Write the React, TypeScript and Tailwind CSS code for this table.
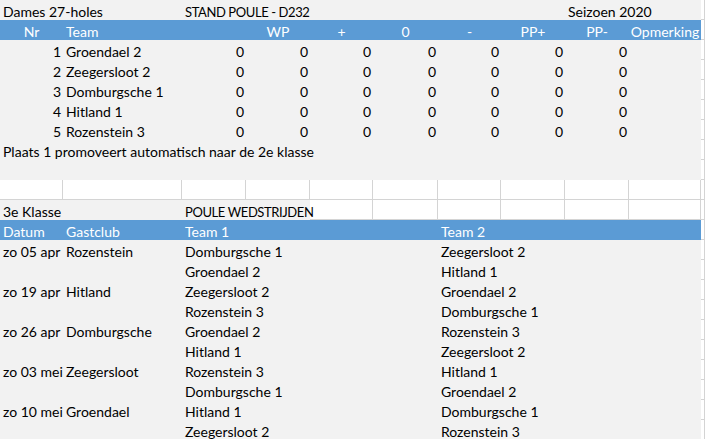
import React from "react";

type Fill = "gray" | "white" | "blue";
type Align = "left" | "right" | "center";

const fills: Record<Fill, string> = {
  gray: "bg-[#f2f2f2] text-black",
  white: "bg-white border-r border-b border-[#d4d4d4]",
  blue: "bg-[#5b9bd5] text-white",
};

const aligns: Record<Align, string> = {
  left: "justify-start pl-[3px]",
  right: "justify-end pr-[2px]",
  center: "justify-center",
};

function Cell({
  fill = "gray",
  align = "left",
  span = "",
  tight = false,
  children,
}: {
  fill?: Fill;
  align?: Align;
  span?: string;
  tight?: boolean;
  children?: React.ReactNode;
}) {
  return (
    <div className={`flex items-end whitespace-nowrap leading-4 ${fills[fill]} ${aligns[align]} ${span}`}>
      {/* text spills over neighbouring cells like in a sheet */}
      <span className={`relative z-10 ${tight ? "text-[13px] tracking-[-0.4px]" : ""}`}>{children}</span>
    </div>
  );
}

// column K: the white strip past the used area
const Edge = () => <Cell fill="white" />;

const teams = ["Groendael 2", "Zeegersloot 2", "Domburgsche 1", "Hitland 1", "Rozenstein 3"];

const matches: [string, string, string, string][] = [
  ["zo 05 apr", "Rozenstein", "Domburgsche 1", "Zeegersloot 2"],
  ["", "", "Groendael 2", "Hitland 1"],
  ["zo 19 apr", "Hitland", "Zeegersloot 2", "Groendael 2"],
  ["", "", "Rozenstein 3", "Domburgsche 1"],
  ["zo 26 apr", "Domburgsche", "Groendael 2", "Rozenstein 3"],
  ["", "", "Hitland 1", "Zeegersloot 2"],
  ["zo 03 mei", "Zeegersloot", "Rozenstein 3", "Hitland 1"],
  ["", "", "Domburgsche 1", "Groendael 2"],
  ["zo 10 mei", "Groendael", "Hitland 1", "Domburgsche 1"],
  ["", "", "Zeegersloot 2", "Rozenstein 3"],
];

const headers = ["", "WP", "+", "0", "-", "PP+", "PP-"];

export default function App() {
  return (
    <div
      className="w-[705px] h-[439px] overflow-hidden bg-white text-[14px]"
      style={{ fontFamily: "Lato, 'Open Sans', sans-serif" }}
    >
      <div className="grid grid-cols-[63px_119px_64px_64px_63px_65px_63px_64px_64px_72px_1fr] auto-rows-[20px]">
        {/* title row */}
        <Cell span="col-span-2">Dames 27-holes</Cell>
        <Cell span="col-span-3" tight>STAND POULE - D232</Cell>
        <Cell />
        <Cell />
        <Cell />
        <Cell span="col-span-2">Seizoen 2020</Cell>
        <Edge />

        {/* standings header */}
        <Cell fill="blue" align="center">Nr</Cell>
        <Cell fill="blue">Team</Cell>
        {headers.map((h, i) => (
          <Cell key={i} fill="blue" align="center">{h}</Cell>
        ))}
        <Cell fill="blue" align="center">Opmerking</Cell>
        <Edge />

        {teams.map((t, i) => (
          <React.Fragment key={t}>
            <Cell align="right">{i + 1}</Cell>
            <Cell>{t}</Cell>
            {headers.map((_, j) => (
              <Cell key={j} align="right">0</Cell>
            ))}
            <Cell />
            <Edge />
          </React.Fragment>
        ))}

        <Cell span="col-span-10">Plaats 1 promoveert automatisch naar de 2e klasse</Cell>
        <Edge />
        <Cell span="col-span-10" />
        <Edge />

        {/* empty white row with gridlines */}
        {Array.from({ length: 11 }, (_, i) => (
          <Cell key={i} fill="white" />
        ))}

        <Cell span="col-span-2">3e Klasse</Cell>
        <Cell span="col-span-2" tight>POULE WEDSTRIJDEN</Cell>
        {Array.from({ length: 7 }, (_, i) => (
          <Cell key={i} fill="white" />
        ))}

        {/* matches header */}
        <Cell fill="blue">Datum</Cell>
        <Cell fill="blue">Gastclub</Cell>
        <Cell fill="blue" span="col-span-4">Team 1</Cell>
        <Cell fill="blue" span="col-span-4">Team 2</Cell>
        <Edge />

        {matches.map(([d, club, t1, t2], i) => (
          <React.Fragment key={i}>
            <Cell>{d}</Cell>
            <Cell>{club}</Cell>
            <Cell span="col-span-4">{t1}</Cell>
            <Cell span="col-span-4">{t2}</Cell>
            <Edge />
          </React.Fragment>
        ))}
      </div>
    </div>
  );
}
